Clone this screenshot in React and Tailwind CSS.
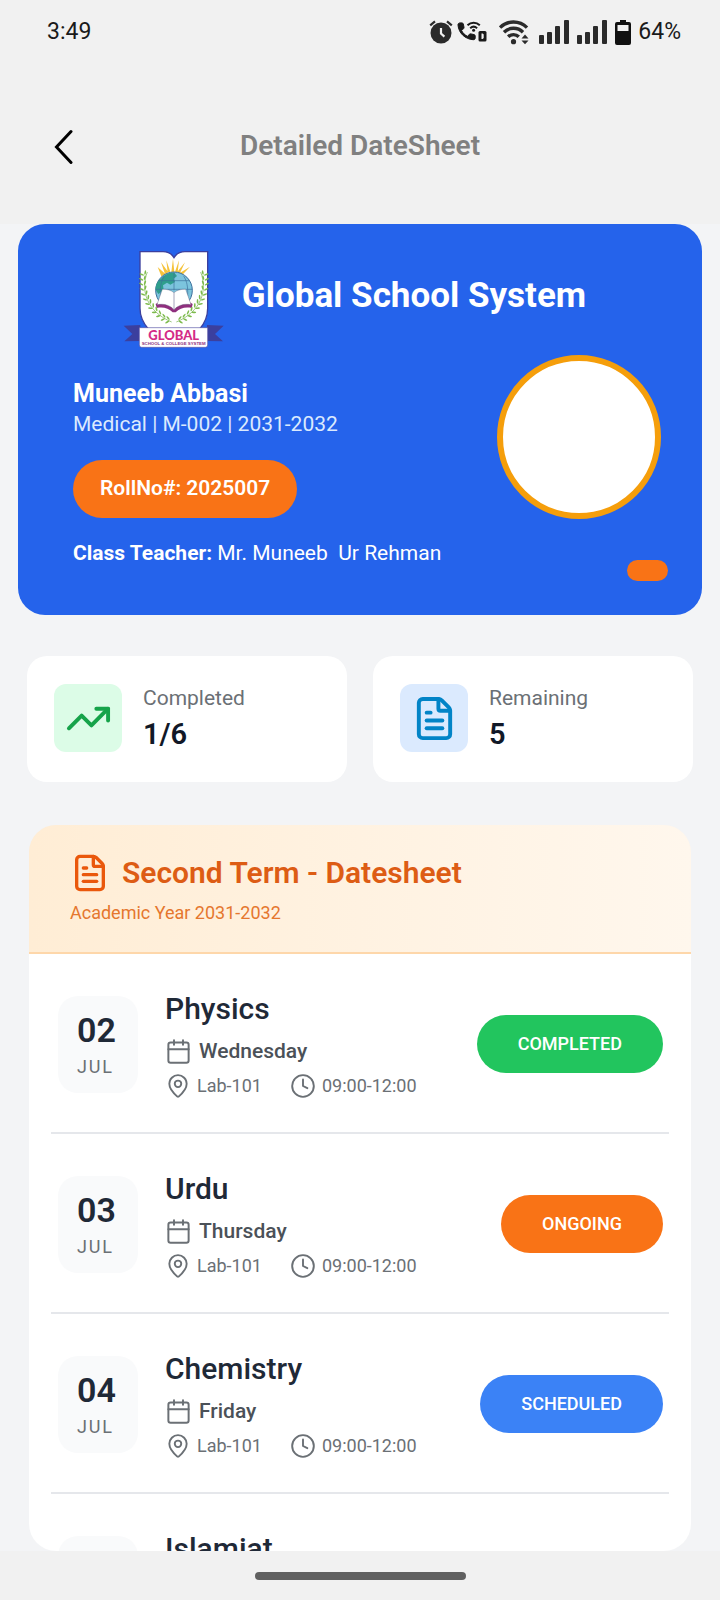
import React from "react";
import { Calendar, Clock, FileText, MapPin, TrendingUp } from "lucide-react";

const exams = [
  {
    id: 1,
    day: "02",
    month: "JUL",
    subject: "Physics",
    weekday: "Wednesday",
    room: "Lab-101",
    time: "09:00-12:00",
    status: "COMPLETED",
  },
  {
    id: 2,
    day: "03",
    month: "JUL",
    subject: "Urdu",
    weekday: "Thursday",
    room: "Lab-101",
    time: "09:00-12:00",
    status: "ONGOING",
  },
  {
    id: 3,
    day: "04",
    month: "JUL",
    subject: "Chemistry",
    weekday: "Friday",
    room: "Lab-101",
    time: "09:00-12:00",
    status: "SCHEDULED",
  },
  {
    id: 4,
    day: "05",
    month: "JUL",
    subject: "Islamiat",
    weekday: "Saturday",
    room: "Lab-101",
    time: "09:00-12:00",
    status: "SCHEDULED",
  },
];

const statusColors = {
  COMPLETED: "bg-[#22c55e]",
  ONGOING: "bg-[#f97316]",
  SCHEDULED: "bg-[#3b82f6]",
};

const SignalIcon = () => (
  <svg width="30" height="24" viewBox="0 0 30 24" fill="#2b2b2b">
    <rect x="0" y="15" width="5" height="9" rx="1" />
    <rect x="8" y="12" width="5" height="12" rx="1" />
    <rect x="16" y="6" width="5" height="18" rx="1" />
    <rect x="25" y="0" width="5" height="24" rx="1" />
  </svg>
);

const StatusBar = () => (
  <div className="h-16 shrink-0 flex items-center justify-between pl-[47px] pr-[39px] text-[23px] leading-7 text-[#1a1a1a]">
    <span>3:49</span>

    <div className="flex items-center">
      {/* alarm */}
      <svg width="24" height="24" viewBox="0 0 24 24" fill="none">
        <circle cx="12" cy="13" r="10.5" fill="#2b2b2b" />
        <path
          d="M1.2 5.4 6 1.4M22.8 5.4 18 1.4"
          stroke="#2b2b2b"
          strokeWidth="2.2"
        />
        <path d="M12 8v5.6l3.4 3" stroke="#f1f1f1" strokeWidth="2.2" />
      </svg>

      {/* wifi calling */}
      <svg
        className="ml-1"
        width="30"
        height="24"
        viewBox="0 0 30 24"
        fill="none"
      >
        <path
          d="M1 5.2C.8 3.6 1.8 3 3 2.9h2c.7 0 1.1.4 1.3 1.1l.7 3.2c.1.6 0 1-.4 1.4l-2 2c1.3 2.5 3.2 4.4 5.8 5.7l2.1-2c.4-.4.9-.5 1.4-.4l3.2.7c.7.2 1.1.6 1.1 1.3v2c0 1.2-.8 1.9-2 1.8C8 19.2 1.7 13 1 5.2z"
          fill="#1a1a1a"
          stroke="#1a1a1a"
        />
        <path
          d="M10.5 5.2c3.5-3.3 8.8-3.3 12.3 0M13.2 8.2c2-1.8 4.9-1.8 6.9 0"
          stroke="#1a1a1a"
          strokeWidth="2"
        />
        <circle cx="16.6" cy="10.3" r="1.5" fill="#1a1a1a" />
        <rect x="21.5" y="11" width="8" height="10.5" rx="1.5" fill="#1a1a1a" />
        <path d="M24.5 13.6h1.2l1 1V18l-1 1h-1.2z" fill="#f1f1f1" />
      </svg>

      {/* wifi with data arrows */}
      <svg
        className="ml-3"
        width="30"
        height="25"
        viewBox="0 0 30 25"
        fill="none"
      >
        <path
          d="M1 7.6c7.4-7.4 19.6-7.4 27 0M5 12.2c5.2-5.2 13.8-5.2 19 0M9.2 16.8c2.9-2.9 7.7-2.9 10.6 0"
          stroke="#2b2b2b"
          strokeWidth="3.4"
        />
        <circle cx="14.5" cy="21.7" r="2.6" fill="#2b2b2b" />
        <path
          d="M22.5 18.4 26 14.6l3.5 3.8zM22.5 20.4h7L26 24.2z"
          fill="#2b2b2b"
        />
      </svg>

      <div className="ml-2.5 flex gap-2">
        <SignalIcon />
        <SignalIcon />
      </div>

      {/* battery */}
      <svg className="ml-2" width="16" height="25" viewBox="0 0 16 25">
        <path
          d="M5 0h6v2h3a2 2 0 0 1 2 2v19a2 2 0 0 1-2 2H2a2 2 0 0 1-2-2V4a2 2 0 0 1 2-2h3z"
          fill="#111"
        />
        <path d="M2.5 5h11v6h-11z" fill="#f1f1f1" />
      </svg>

      <span className="ml-[7px]">64%</span>
    </div>
  </div>
);

const leaves = [
  [136, 135, 60],
  [134, 150, 65],
  [134, 165, 70],
  [136, 180, 65],
  [140, 195, 60],
  [146, 209, 55],
  [153, 222, 50],
  [162, 234, 45],
  [173, 245, 35],
  [185, 255, 25],
  [198, 264, 15],
  [211, 271, 10],
];

const Laurel = () => (
  <g>
    <path
      d="M145 126C124 180 142 244 218 276"
      fill="none"
      stroke="#6fae45"
      strokeWidth="2"
    />
    {leaves.map(([x, y, r]) => (
      <g key={y} transform={`translate(${x} ${y}) rotate(${r})`} fill="#7dbb4c">
        <ellipse cx="-5" cy="-6" rx="7" ry="2.5" transform="rotate(40 -5 -6)" />
        <ellipse cx="-5" cy="6" rx="7" ry="2.5" transform="rotate(-40 -5 6)" />
      </g>
    ))}
  </g>
);

const SchoolLogo = () => (
  <svg width="101" height="98" viewBox="72 60 303 294" className="shrink-0">
    {/* ribbon tails */}
    <path
      d="M74 287l50-2v48l-48 1 24-22zM374 287l-50-2v48l48 1-24-22z"
      fill="#3b3f9e"
    />
    {/* shield */}
    <path
      d="M123 65h69c16 0 27 8 33 18 6-10 17-18 33-18h68v170c0 28-10 46-24 62H148c-14-16-25-34-25-62z"
      fill="#fff"
      stroke="#3b3f9e"
      strokeWidth="4"
    />
    {/* sun */}
    <path
      d="M176 111l24 22-13 6zM186 97l22 30-10 5zM202 91l12 34-8 2zM222 86l4 40h-9zM240 91l-4 36-8-2zM258 97l-16 34-8-4zM273 110l-24 26-8-6z"
      fill="#f5c33b"
    />
    <circle cx="225" cy="181" r="55" fill="#7cc4dd" stroke="#3c6f9c" strokeWidth="3" />
    <path
      d="M186 146c12-14 24-19 40-18l8 10-10 8 4 10-14 8-10-6-12 8 2 14-16 12-8-12c0-14 4-26 16-34z"
      fill="#2f9e8c"
    />
    <path
      d="M171 178h108M180 152h90M225 127v54M196 138c-10 16-13 32-12 60M254 138c10 16 13 32 12 60"
      fill="none"
      stroke="#3c6f9c"
      strokeWidth="2"
    />
    {/* book */}
    <path
      d="M170 222l10-6c18-2 34 6 45 18 11-12 28-20 46-18l10 6-3 12c-18-4-36 0-48 13h-9c-12-13-30-17-48-13z"
      fill="#8f2f7e"
    />
    <path
      d="M190 178c14-1 27 3 35 10 8-7 20-11 35-10l16 46c-22-4-39 2-51 15-12-13-29-19-51-15z"
      fill="#fff"
      stroke="#4a4a6a"
      strokeWidth="1"
    />
    <path d="M225 188v50" fill="none" stroke="#77779a" strokeWidth="2" />
    <Laurel />
    <g transform="translate(450 0) scale(-1 1)">
      <Laurel />
    </g>
    {/* banner */}
    <path
      d="M121 293h205v52q0 7-7 7H128q-7 0-7-7z"
      fill="#fff"
      stroke="#5b57a8"
      strokeWidth="2"
    />
    <text
      x="224"
      y="330"
      textAnchor="middle"
      fontFamily="Lato, 'Liberation Sans', sans-serif"
      fontSize="39"
      fontWeight="900"
      fill="#d42a86"
    >
      GLOBAL
    </text>
    <text
      x="224"
      y="346"
      textAnchor="middle"
      fontFamily="'Liberation Sans', sans-serif"
      fontSize="13"
      fontWeight="700"
      fill="#8f2f7e"
    >
      SCHOOL &amp; COLLEGE SYSTEM
    </text>
  </svg>
);

const StatCard = ({ icon: Icon, label, value, boxClass }) => (
  <div className="bg-white rounded-[20px] p-7 pl-[27px] flex items-start gap-[21px]">
    <div
      className={`w-[68px] h-[68px] shrink-0 rounded-xl flex items-center justify-center ${boxClass}`}
    >
      <Icon size={47} />
    </div>

    <div>
      <p className="text-[21px] leading-7 text-[#6b7075]">{label}</p>
      <p className="mt-0.5 text-[29px] leading-10 font-semibold text-[#111827]">
        {value}
      </p>
    </div>
  </div>
);

const ExamRow = ({ exam }) => (
  <li className="mx-[22px] pl-[7px] pr-1.5 pt-[35px] pb-[33px] flex items-center border-b-2 border-gray-200 last:border-b-0">
    <div className="w-20 shrink-0 rounded-[20px] bg-[#f9fafb] pl-[19px] pt-3.5 pb-3.5">
      <p className="text-[34px] leading-10 font-semibold text-[#1f2937]">
        {exam.day}
      </p>
      <p className="mt-[5px] text-[18px] leading-6 tracking-widest text-[#6b7075]">
        {exam.month}
      </p>
    </div>

    <div className="ml-[27px] flex-1 min-w-0">
      <h3 className="text-[30px] leading-10 font-medium text-[#1f2937]">
        {exam.subject}
      </h3>

      <div className="mt-2 flex items-center gap-[7px] text-[21px] leading-7 font-medium text-[#4b5158]">
        <Calendar size={27} strokeWidth={1.75} className="text-[#6b7075]" />
        {exam.weekday}
      </div>

      <div className="mt-2 flex items-center gap-7 text-[18px] leading-[26px] text-[#6b7075]">
        <span className="flex items-center gap-1.5">
          <MapPin size={26} strokeWidth={1.75} />
          {exam.room}
        </span>
        <span className="flex items-center gap-1.5">
          <Clock size={26} strokeWidth={1.75} />
          {exam.time}
        </span>
      </div>
    </div>

    <span
      className={`shrink-0 rounded-full px-[41px] py-[17px] text-[18px] leading-6 font-medium text-white ${statusColors[exam.status]}`}
    >
      {exam.status}
    </span>
  </li>
);

const App = () => {
  return (
    <div className="h-screen flex flex-col overflow-hidden bg-[#f3f4f6] font-[Roboto,sans-serif]">
      <header className="bg-[#f1f1f1] shrink-0">
        <StatusBar />

        <div className="h-40 pt-1 px-[54px] flex items-center">
          <button type="button" aria-label="Go back" className="w-12">
            <svg width="20" height="36" viewBox="0 0 20 36" fill="none">
              <path
                d="M17 3.5 2.5 19 17 34.5"
                stroke="#000"
                strokeWidth="3"
                strokeLinecap="round"
              />
            </svg>
          </button>
          <h1 className="flex-1 text-center text-[28px] leading-9 font-semibold text-[#808080]">
            Detailed DateSheet
          </h1>
          <div className="w-12"></div>
        </div>
      </header>

      <main className="flex-1 min-h-0 flex flex-col">
        {/* Student card */}
        <section className="mx-[18px] shrink-0 rounded-[27px] bg-[#2563eb] text-white pt-[26px] pb-[34px] pl-[55px] pr-[34px]">
          <div className="flex items-start justify-center gap-[18px] pr-8">
            <SchoolLogo />
            <h2 className="mt-[26px] text-[35px] leading-10 font-bold">
              Global School System
            </h2>
          </div>

          <div className="mt-[7px] flex justify-between">
            <div className="pt-[23px]">
              <p className="text-[25px] leading-8 font-bold">Muneeb Abbasi</p>
              <p className="text-[21px] leading-7 text-[#dbeafe]">
                Medical | M-002 | 2031-2032
              </p>

              <div className="mt-[22px] w-fit rounded-full bg-[#f97316] px-[27px] pt-3.5 pb-4 text-[21px] leading-7 font-semibold">
                RollNo#: 2025007
              </div>

              <p className="mt-[21px] text-[21px] leading-7 whitespace-pre">
                <span className="font-bold">Class Teacher:</span>
                {" Mr. Muneeb  Ur Rehman"}
              </p>
            </div>

            <div className="flex flex-col items-end">
              <div className="mr-[7px] w-[164px] h-[164px] rounded-full bg-white border-6 border-[#f59e0b]"></div>
              <div className="mt-[41px] w-[41px] h-[21px] rounded-full bg-[#f97316]"></div>
            </div>
          </div>
        </section>

        {/* Stats */}
        <section className="mt-[41px] mx-[27px] shrink-0 grid grid-cols-2 gap-[26px]">
          <StatCard
            icon={TrendingUp}
            label="Completed"
            value="1/6"
            boxClass="bg-[#dcfce7] text-[#16a34a]"
          />
          <StatCard
            icon={FileText}
            label="Remaining"
            value="5"
            boxClass="bg-[#dbeafe] text-[#0284c7]"
          />
        </section>

        {/* Datesheet */}
        <section className="mt-[43px] mx-[29px] flex-1 min-h-0 rounded-[27px] bg-white overflow-y-auto [scrollbar-width:none]">
          <div className="pt-7 pb-[27px] pl-[41px] pr-6 border-b-2 border-[#fed7aa] bg-linear-to-r from-[#ffedd5] to-[#fff7ed]">
            <div className="flex items-center gap-3 text-[#ea580c]">
              <FileText size={40} />
              <h2 className="text-[30px] leading-10 font-semibold text-[#dd5c14]">
                Second Term - Datesheet
              </h2>
            </div>
            <p className="mt-2 text-[18px] leading-6 text-[#e5772e]">
              Academic Year 2031-2032
            </p>
          </div>

          <ul>
            {exams.map((exam) => (
              <ExamRow key={exam.id} exam={exam} />
            ))}
          </ul>
        </section>
      </main>

      {/* Gesture bar */}
      <footer className="h-[49px] shrink-0 bg-[#f1f1f1] flex items-center justify-center">
        <div className="w-[211px] h-2 rounded-full bg-[#606060]"></div>
      </footer>
    </div>
  );
};

export default App;
